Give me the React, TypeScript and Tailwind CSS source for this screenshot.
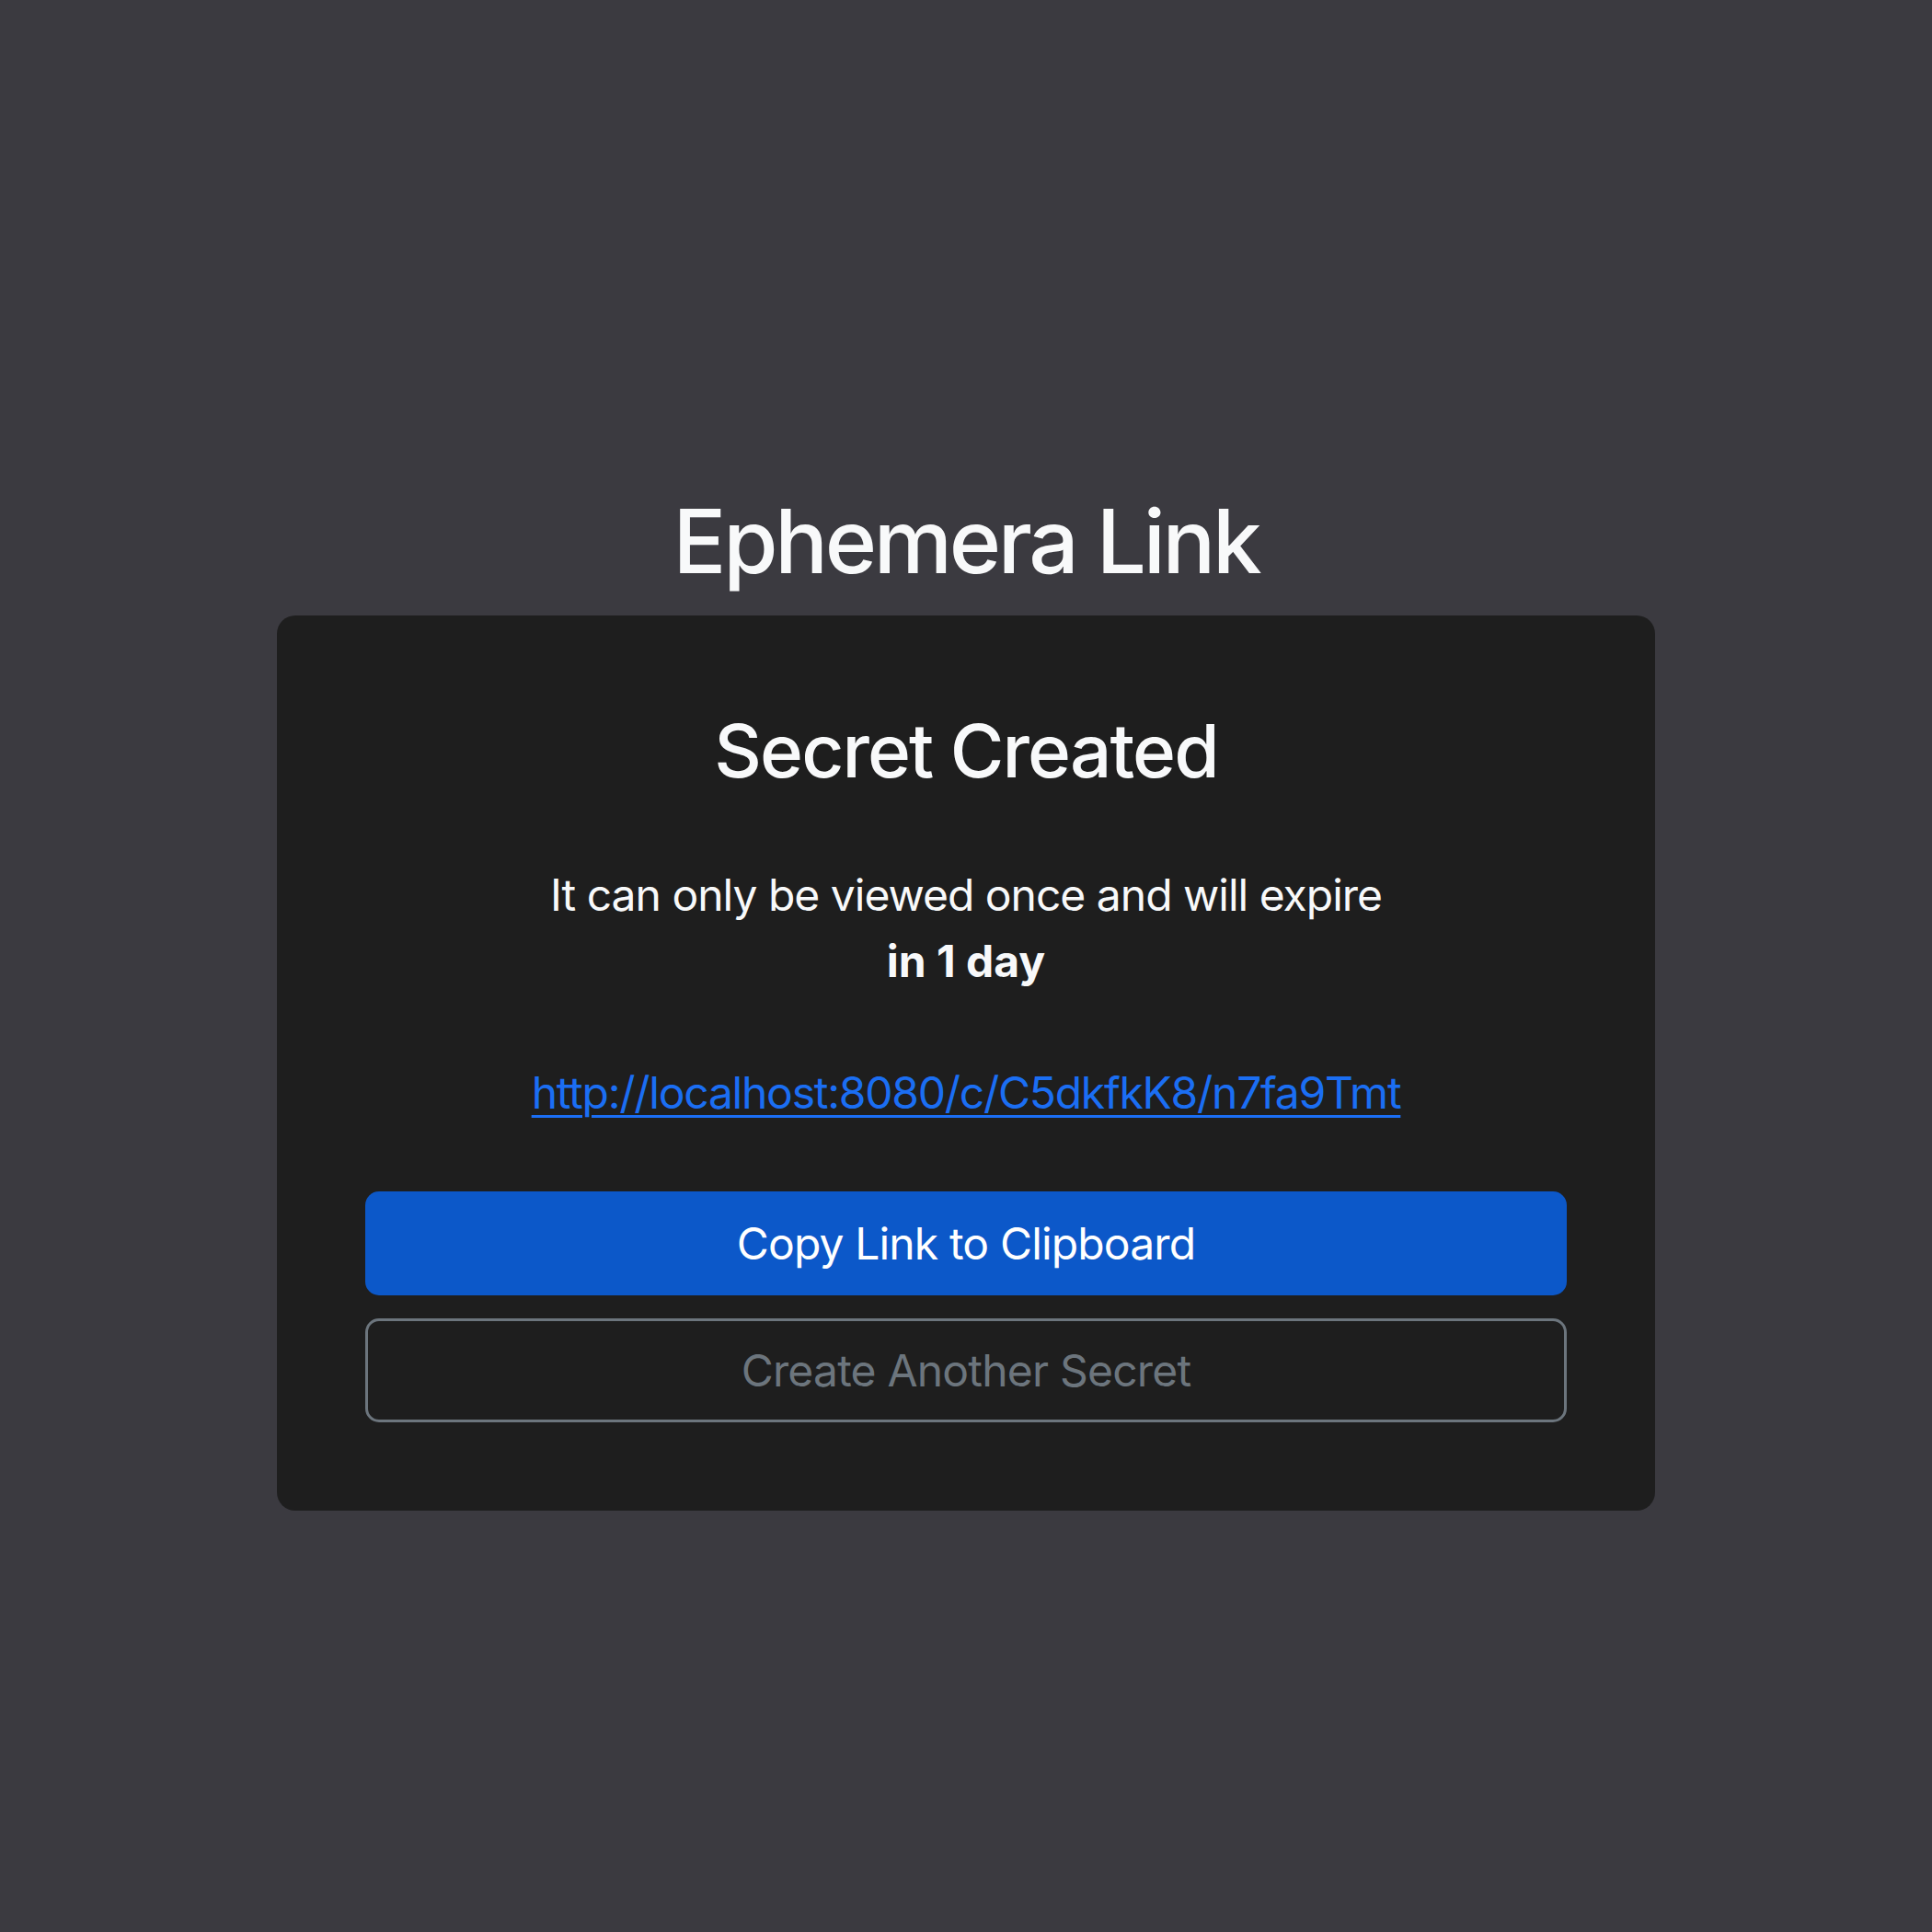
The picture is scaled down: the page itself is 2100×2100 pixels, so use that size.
export default function App() {
  const link = 'http://localhost:8080/c/C5dkfkK8/n7fa9Tmt';

  return (
    <div
      className="min-h-screen w-full bg-[#3b3a40] flex flex-col items-center pt-[531px] text-[#f8f9fa]"
      style={{ fontFamily: 'Inter, "Noto Sans", sans-serif' }}
    >
      <h1 className="text-[96px] leading-[115px] font-medium tracking-[-3.3px] mb-[23px]">Ephemera Link</h1>

      <div className="w-[1498px] rounded-[20px] bg-[#1e1e1e] px-[96px] pt-[99px] pb-[96px] flex flex-col items-center text-center">
        <h2 className="text-[80px] leading-[96px] font-medium tracking-[-1.9px]">Secret Created</h2>

        <p className="mt-[73px] text-[48px] leading-[72px] tracking-[-1px]">
          It can only be viewed once and will expire
          <br />
          <strong className="font-bold tracking-normal">in 1 day</strong>
        </p>

        <a
          href={link}
          className="mt-[71px] text-[48px] leading-[72px] tracking-[-1.25px] text-[#1b6ef3] underline decoration-[3px] underline-offset-[7px]"
        >
          {link}
        </a>

        <div className="mt-[71px] w-full flex flex-col gap-[25px]">
          <button className="h-[113px] w-full rounded-[15px] bg-[#0c58c9] text-white text-[48px] tracking-[-0.85px]">
            Copy Link to Clipboard
          </button>
          <button className="h-[113px] w-full rounded-[15px] border-[3px] border-[#6c757d] text-[#6c757d] text-[48px] tracking-[-0.8px]">
            Create Another Secret
          </button>
        </div>
      </div>
    </div>
  );
}
